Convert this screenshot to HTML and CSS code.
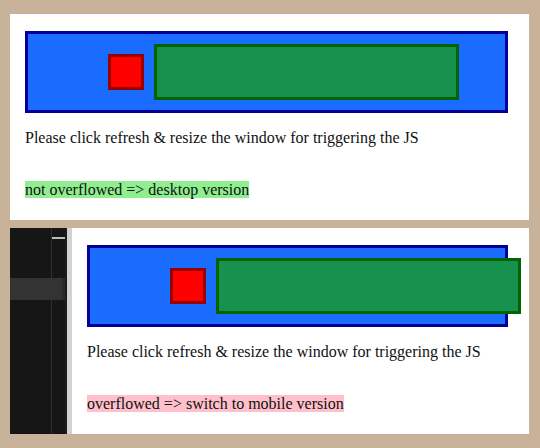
FILE: index.html
```html
<!DOCTYPE html>
<html>
<head>
<meta charset="utf-8">
<link rel="stylesheet" href="styles.css">
</head>
<body>
<div class="panel">
  <div class="content">
    <div class="bar">
      <div class="red"></div>
      <div class="green"></div>
    </div>
    <p class="msg">Please click refresh &amp; resize the window for triggering the JS</p>
    <div class="status"><span class="ok">not overflowed =&gt; desktop version</span></div>
  </div>
</div>
<div class="panel">
  <div class="sidebar">
    <div class="mark"></div>
    <div class="band"></div>
  </div>
  <div class="edge"></div>
  <div class="content">
    <div class="bar">
      <div class="red"></div>
      <div class="green"></div>
    </div>
    <p class="msg">Please click refresh &amp; resize the window for triggering the JS</p>
    <div class="status"><span class="bad">overflowed =&gt; switch to mobile version</span></div>
  </div>
</div>
</body>
</html>
```
FILE: styles.css
```css
html, body {
  margin: 0;
  padding: 0;
}
body {
  background: #c8b299;
  padding: 14px 11px 0 10px;
  width: 540px;
  height: 448px;
  box-sizing: border-box;
  display: flex;
  flex-direction: column;
  gap: 8px;
  font-family: "Liberation Serif", "Times New Roman", serif;
  font-size: 16px;
  color: #111;
}
.panel {
  background: #fff;
  height: 206px;
  display: flex;
  flex-direction: row;
}
.content {
  flex: 1;
  min-width: 0;
  padding: 17px 21px 0 15px;
  display: flex;
  flex-direction: column;
}
.bar {
  box-sizing: border-box;
  height: 82px;
  border: 3px solid #000096;
  background: #1a6cff;
  display: flex;
  align-items: center;
  gap: 10px;
  padding-left: 80px;
}
.red {
  flex: 0 0 auto;
  box-sizing: border-box;
  width: 36px;
  height: 36px;
  background: #ff0000;
  border: 3px solid #960000;
}
.green {
  flex: 0 0 auto;
  box-sizing: border-box;
  width: 305px;
  height: 56px;
  background: #16914e;
  border: 3px solid #006400;
}
.msg {
  margin: 16px 0 0 0;
  line-height: 18px;
}
.status {
  margin-top: 34px;
  line-height: 18px;
}
.ok {
  background: #90ee90;
}
.bad {
  background: #ffc0cb;
}
.sidebar {
  flex: 0 0 55px;
  background: linear-gradient(to right, #161616 41px, #2f2f2f 41px, #2f2f2f 42px, #161616 42px);
  display: flex;
  flex-direction: column;
}
.mark {
  margin: 9px 0 0 42px;
  width: 13px;
  height: 2px;
  background: #bdbdbd;
}
.band {
  margin-top: 39px;
  height: 22px;
  background: linear-gradient(to right, #333 52px, #2a2a2a 52px);
}
.edge {
  flex: 0 0 7px;
  background: linear-gradient(to right, #1c1c1c 2px, #d2d2d2 2px);
}
```
